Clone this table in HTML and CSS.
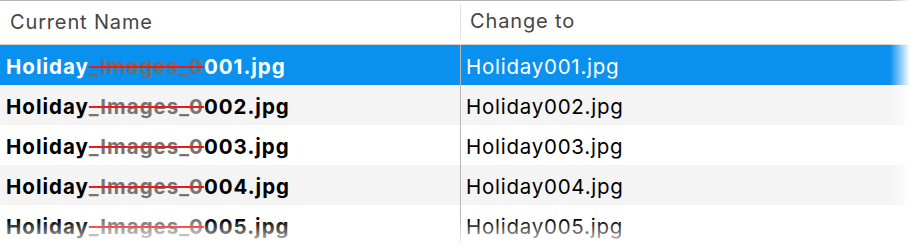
FILE: index.html
```html
<!DOCTYPE html>
<html>
<head>
<meta charset="utf-8">
<link rel="stylesheet" href="styles.css">
</head>
<body>
<div class="table">
  <div class="head">
    <div class="hcell first">Current Name</div>
    <div class="hcell second">Change to</div>
  </div>
  <div class="row selected">
    <div class="cell old">Holiday<span class="cut">_Images_0</span>001.jpg</div>
    <div class="cell new">Holiday001.jpg</div>
  </div>
  <div class="row alt">
    <div class="cell old">Holiday<span class="cut">_Images_0</span>002.jpg</div>
    <div class="cell new">Holiday002.jpg</div>
  </div>
  <div class="row">
    <div class="cell old">Holiday<span class="cut">_Images_0</span>003.jpg</div>
    <div class="cell new">Holiday003.jpg</div>
  </div>
  <div class="row alt">
    <div class="cell old">Holiday<span class="cut">_Images_0</span>004.jpg</div>
    <div class="cell new">Holiday004.jpg</div>
  </div>
  <div class="row">
    <div class="cell old">Holiday<span class="cut">_Images_0</span>005.jpg</div>
    <div class="cell new">Holiday005.jpg</div>
  </div>
  <div class="fade-right"></div>
  <div class="fade-bottom"></div>
</div>
</body>
</html>
```
FILE: styles.css
```css
html, body {
  margin: 0;
  padding: 0;
  background: #ffffff;
}
body {
  width: 920px;
  height: 250px;
  overflow: hidden;
  font-family: "Inter", "Liberation Sans", sans-serif;
}
.table {
  position: relative;
  width: 920px;
  height: 250px;
  border-top: 1px solid #b4b4b4;
  box-sizing: border-box;
}
.head {
  display: grid;
  grid-template-columns: 460px 1fr;
  height: 43px;
  border-bottom: 1px solid #d2d2d2;
  align-items: center;
}
.hcell {
  font-size: 20px;
  letter-spacing: 0.85px;
  color: #454545;
  line-height: 20px;
  padding-bottom: 2px;
}
.hcell.first {
  padding-left: 10px;
}
.hcell.second {
  padding-left: 9px;
  border-left: 1px solid #e2e2e2;
  height: 35px;
  line-height: 35px;
  padding-bottom: 0;
  margin-top: -3px;
}
.row {
  display: grid;
  grid-template-columns: 460px 1fr;
  height: 40px;
  align-items: stretch;
}
.row.alt {
  background: #f4f4f4;
}
.row.selected {
  background: #0a91f0;
}
.cell {
  display: flex;
  align-items: center;
  font-size: 20.5px;
  color: #000;
  padding-top: 2px;
  box-sizing: border-box;
}
.cell.old {
  padding-left: 6px;
  font-weight: 700;
  letter-spacing: 1px;
}
.cell.new {
  padding-left: 5px;
  border-left: 1px solid #b8b8b8;
  font-weight: 400;
  letter-spacing: 0.75px;
}
.cut {
  color: #747474;
  text-decoration: line-through;
  text-decoration-color: #f21818;
  text-decoration-thickness: 2px;
}
.selected .cell {
  color: #ffffff;
}
.selected .cut {
  color: #6e6e6e;
}
.fade-right {
  position: absolute;
  top: -1px;
  right: 0;
  width: 30px;
  height: 251px;
  background: linear-gradient(to right, rgba(255,255,255,0) 0px, rgba(255,255,255,1) 20px);
}
.fade-bottom {
  position: absolute;
  left: 0;
  bottom: 0;
  width: 920px;
  height: 30px;
  background: linear-gradient(to bottom, rgba(255,255,255,0) 0px, rgba(255,255,255,1) 28px);
}
```
